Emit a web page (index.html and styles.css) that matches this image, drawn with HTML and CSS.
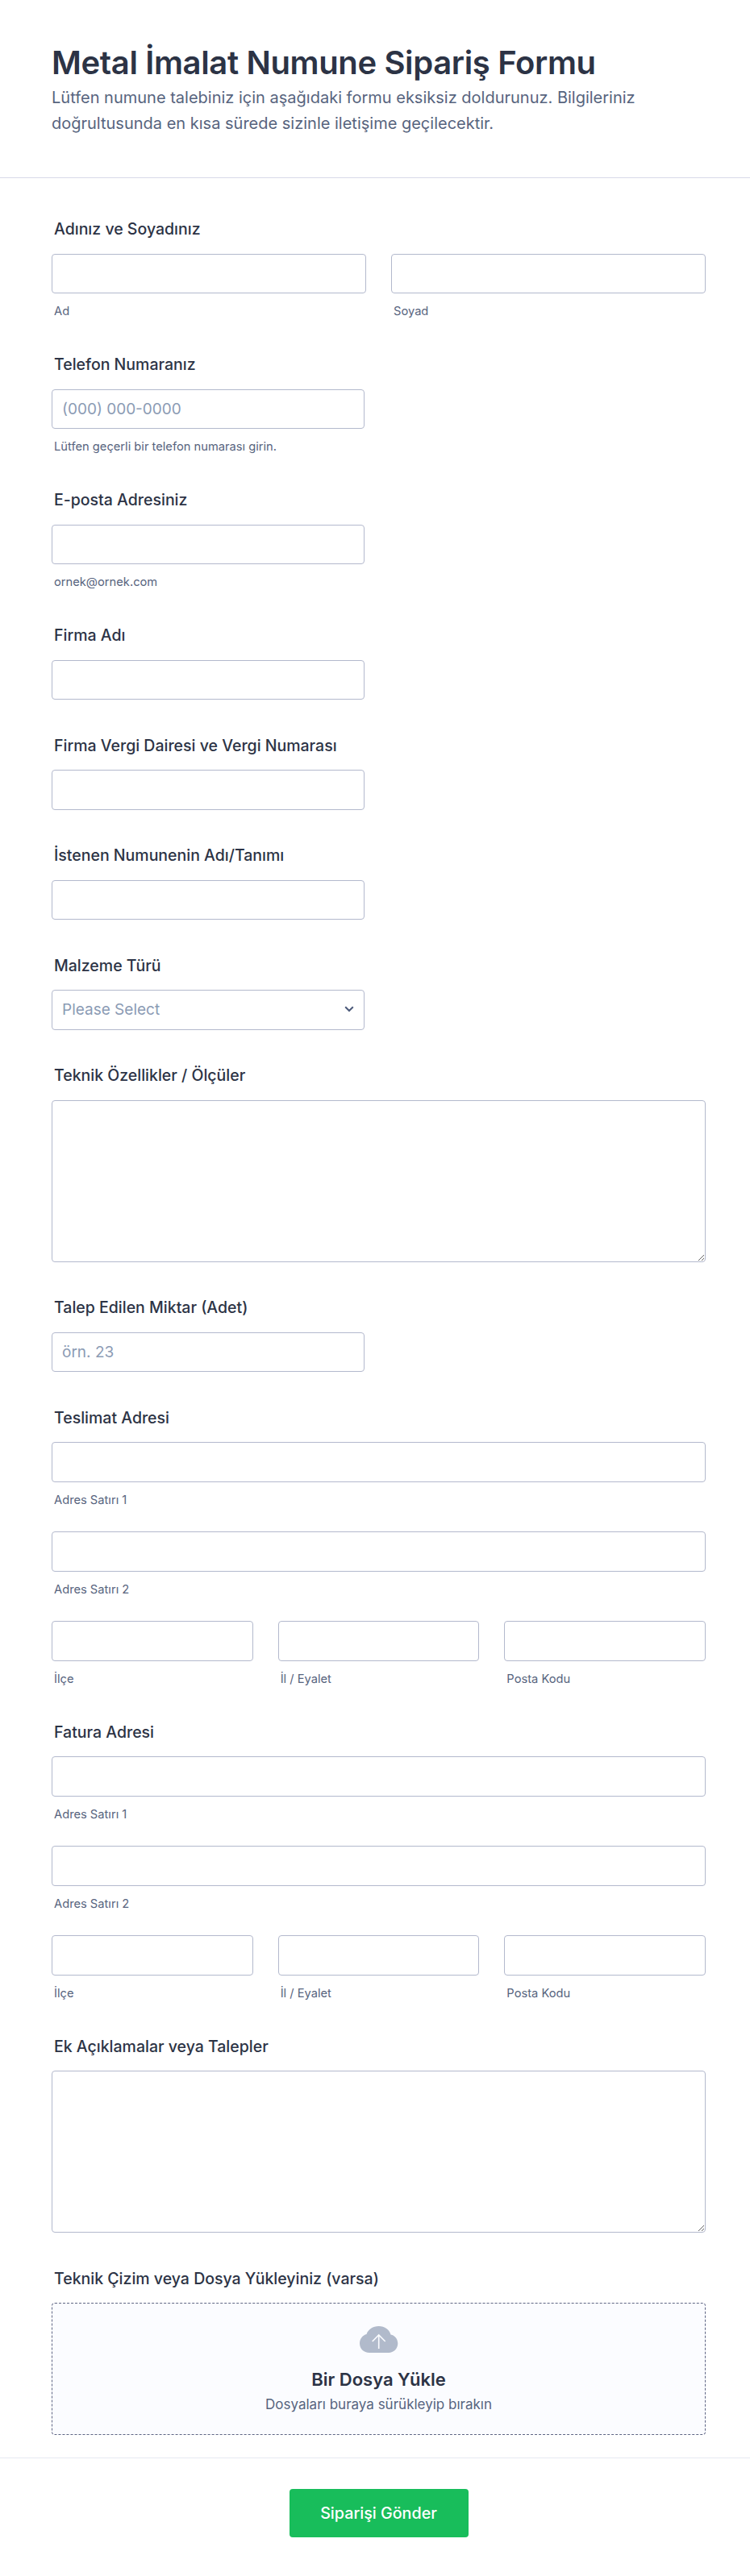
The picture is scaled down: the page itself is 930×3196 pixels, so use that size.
FILE: index.html
```html
<!DOCTYPE html>
<html lang="tr">
  <head>
    <meta charset="utf-8">
    <title>Metal İmalat Numune Sipariş Formu</title>
    <link rel="stylesheet" href="styles.css">
  </head>
  <body>
    <form class="form">
      <header class="form-header">
        <h1>Metal İmalat Numune Sipariş Formu</h1>
        <p>Lütfen numune talebiniz için aşağıdaki formu eksiksiz doldurunuz. Bilgileriniz doğrultusunda en kısa sürede sizinle iletişime geçilecektir.</p>
      </header>

      <div class="form-body">
        <div class="field">
          <label>Adınız ve Soyadınız</label>
          <div class="cols cols-2">
            <div><input type="text"><span class="sub">Ad</span></div>
            <div><input type="text"><span class="sub">Soyad</span></div>
          </div>
        </div>

        <div class="field">
          <label>Telefon Numaranız</label>
          <input class="short" type="text" placeholder="(000) 000-0000">
          <span class="sub">Lütfen geçerli bir telefon numarası girin.</span>
        </div>

        <div class="field">
          <label>E-posta Adresiniz</label>
          <input class="short" type="text">
          <span class="sub">ornek@ornek.com</span>
        </div>

        <div class="field">
          <label>Firma Adı</label>
          <input class="short" type="text">
        </div>

        <div class="field">
          <label>Firma Vergi Dairesi ve Vergi Numarası</label>
          <input class="short" type="text">
        </div>

        <div class="field">
          <label>İstenen Numunenin Adı/Tanımı</label>
          <input class="short" type="text">
        </div>

        <div class="field">
          <label>Malzeme Türü</label>
          <div class="select-wrap">
            <select>
              <option>Please Select</option>
            </select>
            <svg class="chevron" width="12" height="8" viewBox="0 0 12 8"><path d="M1.200 1.200 6 6l4.800-4.800" fill="none" stroke="#4c5a7a" stroke-width="2"/></svg>
          </div>
        </div>

        <div class="field">
          <label>Teknik Özellikler / Ölçüler</label>
          <textarea></textarea>
        </div>

        <div class="field">
          <label>Talep Edilen Miktar (Adet)</label>
          <input class="short" type="text" placeholder="örn. 23">
        </div>

        <div class="field">
          <label>Teslimat Adresi</label>
          <input type="text"><span class="sub">Adres Satırı 1</span>
          <input class="next" type="text"><span class="sub">Adres Satırı 2</span>
          <div class="cols cols-3 next">
            <div><input type="text"><span class="sub">İlçe</span></div>
            <div><input type="text"><span class="sub">İl / Eyalet</span></div>
            <div><input type="text"><span class="sub">Posta Kodu</span></div>
          </div>
        </div>

        <div class="field">
          <label>Fatura Adresi</label>
          <input type="text"><span class="sub">Adres Satırı 1</span>
          <input class="next" type="text"><span class="sub">Adres Satırı 2</span>
          <div class="cols cols-3 next">
            <div><input type="text"><span class="sub">İlçe</span></div>
            <div><input type="text"><span class="sub">İl / Eyalet</span></div>
            <div><input type="text"><span class="sub">Posta Kodu</span></div>
          </div>
        </div>

        <div class="field">
          <label>Ek Açıklamalar veya Talepler</label>
          <textarea></textarea>
        </div>

        <div class="field field-last">
          <label>Teknik Çizim veya Dosya Yükleyiniz (varsa)</label>
          <div class="upload">
            <svg class="cloud" width="48" height="33" viewBox="0 0 48 33">
              <path d="M12 33C5 33 0 28 0 21.500 0 15.500 4 11 8.500 10 10.500 4 16.500 0 23.700 0 31 0 37 4.500 38.500 10.500 43.500 11.500 47.300 16 47.300 21.500 47.300 28 42 33 36 33Z" fill="#b1bacb"/>
              <path d="M23.700 28V11M15.700 19 23.700 11l8 8" fill="none" stroke="#fbfcff" stroke-width="1.600"/>
            </svg>
            <strong>Bir Dosya Yükle</strong>
            <span>Dosyaları buraya sürükleyip bırakın</span>
          </div>
        </div>
      </div>

      <footer class="form-footer">
        <button type="button">Siparişi Gönder</button>
      </footer>
    </form>
  </body>
</html>
```

FILE: styles.css
```css
* {
  box-sizing: border-box;
}

body {
  margin: 0;
  background-color: #fff;
  font-family: Inter, "Liberation Sans", sans-serif;
  color: #2c3345;
}

.form-header {
  height: 221px;
  padding: 51px 55px 0 64px;
  border-bottom: 1px solid #d8dae9;
}

h1 {
  margin: 0;
  font-size: 40px;
  line-height: 54px;
  font-weight: 600;
  letter-spacing: -0.36px;
}

.form-header p {
  margin: 0;
  font-size: 20px;
  line-height: 32px;
  color: #57647e;
}

.form-body {
  padding: 51px 55px 28px 64px;
}

.field {
  margin-bottom: 44.5px;
}

.field-last {
  margin-bottom: 0;
}

label {
  display: block;
  height: 24px;
  margin: 0 0 18.5px 3px;
  font-size: 19.5px;
  line-height: 24px;
  font-weight: 500;
  color: #2c3345;
}

input,
select,
textarea {
  display: block;
  width: 100%;
  height: 49.5px;
  padding: 0 12px;
  border: 1px solid #b3b9cd;
  border-radius: 4px;
  background-color: #fff;
  font-family: inherit;
  font-size: 19px;
  color: #2c3345;
}

input::placeholder {
  color: #8b9bb4;
}

.short,
.select-wrap {
  width: 388px;
}

.select-wrap {
  position: relative;
}

select {
  appearance: none;
  color: #8b9bb4;
}

.chevron {
  position: absolute;
  top: 20px;
  right: 13px;
}

textarea {
  height: 201px;
}

.cols {
  display: grid;
  gap: 31px;
}

.cols-2 {
  grid-template-columns: 1fr 1fr;
}

.cols-3 {
  grid-template-columns: 1fr 1fr 1fr;
}

.sub {
  display: block;
  height: 18.5px;
  margin: 13px 0 0 3px;
  font-size: 14.7px;
  line-height: 18.5px;
  color: #57647e;
}

.next {
  margin-top: 30px;
}

.upload {
  display: flex;
  flex-direction: column;
  align-items: center;
  height: 164px;
  padding-top: 28px;
  border: 1px dashed #5f6685;
  border-radius: 4px;
  background-color: #fbfcff;
}

.cloud {
  display: block;
}

.upload strong {
  margin-top: 18px;
  font-size: 22px;
  line-height: 30px;
  font-weight: 600;
}

.upload span {
  margin-top: 4px;
  font-size: 17px;
  line-height: 24px;
  color: #57647e;
}

.form-footer {
  display: flex;
  justify-content: center;
  height: 148px;
  padding: 38px 55px 0 64px;
  border-top: 1px solid #e6e8f1;
}

button {
  width: 222px;
  height: 60px;
  border: none;
  border-radius: 4px;
  background-color: #18bd5b;
  color: #fff;
  font-family: inherit;
  font-size: 19.7px;
  font-weight: 500;
  cursor: pointer;
}
```
